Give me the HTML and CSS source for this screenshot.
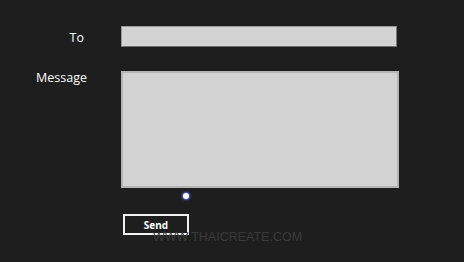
FILE: index.html
```html
<!DOCTYPE html>
<html lang="en">
<head>
  <meta charset="UTF-8">
  <title>Send Message</title>
  <link rel="stylesheet" href="styles.css">
</head>
<body>
  <div class="page">
    <form class="mail-form">
      <div class="row row-to">
        <label class="label" for="to">To</label>
        <input class="field" id="to" type="text">
      </div>
      <div class="row row-message">
        <label class="label" for="message">Message</label>
        <textarea class="field area" id="message"></textarea>
      </div>
      <div class="row row-dot">
        <span class="dot"></span>
      </div>
      <div class="row row-send">
        <button class="btn" type="button">Send</button>
      </div>
    </form>
    <div class="watermark">WWW.THAICREATE.COM</div>
  </div>
</body>
</html>
```

FILE: styles.css
```css
html, body {
  margin: 0;
  padding: 0;
  height: 100%;
}

body {
  background: #1e1e1e;
  color: #ffffff;
  font-family: 'Open Sans', 'Noto Sans', sans-serif;
  overflow: hidden;
}

.page {
  position: relative;
  height: 100%;
}

.mail-form {
  padding-top: 26px;
  display: flex;
  flex-direction: column;
}

.row {
  display: flex;
  align-items: flex-start;
}

.label {
  width: 121px;
  box-sizing: border-box;
  text-align: right;
  font-size: 12.5px;
  line-height: 16px;
}

.row-to .label {
  padding-right: 37px;
  padding-top: 4px;
}

.row-message {
  margin-top: 24px;
}

.row-message .label {
  padding-right: 34px;
  margin-top: -1px;
}

.field {
  margin: 0;
  padding: 0;
  box-sizing: border-box;
  background: #d3d3d3;
  border: 1px solid #9a9a9a;
  border-bottom-color: #6e6e6e;
  border-right-color: #7a7a7a;
  width: 276px;
  height: 21px;
  outline: none;
  resize: none;
}

.area {
  width: 278px;
  height: 117px;
  border: 2px solid #b4b4b4;
}

.row-dot {
  padding-left: 183px;
  margin-top: 5px;
}

.dot {
  width: 6px;
  height: 6px;
  border-radius: 50%;
  background: #ffffff;
  box-shadow: 0 0 2px 1px #4a6fd8;
}

.row-send {
  padding-left: 123px;
  margin-top: 15px;
}

.btn {
  width: 66px;
  height: 21px;
  box-sizing: border-box;
  background: transparent;
  border: 2px solid #f2f2f2;
  color: #ffffff;
  font-family: 'Open Sans', 'Noto Sans', sans-serif;
  font-weight: bold;
  font-size: 10px;
  padding: 0;
}

.watermark {
  position: absolute;
  left: 153px;
  top: 230px;
  font-family: 'Liberation Sans', sans-serif;
  font-size: 12.5px;
  color: #3a3a3a;
  pointer-events: none;
}
```
